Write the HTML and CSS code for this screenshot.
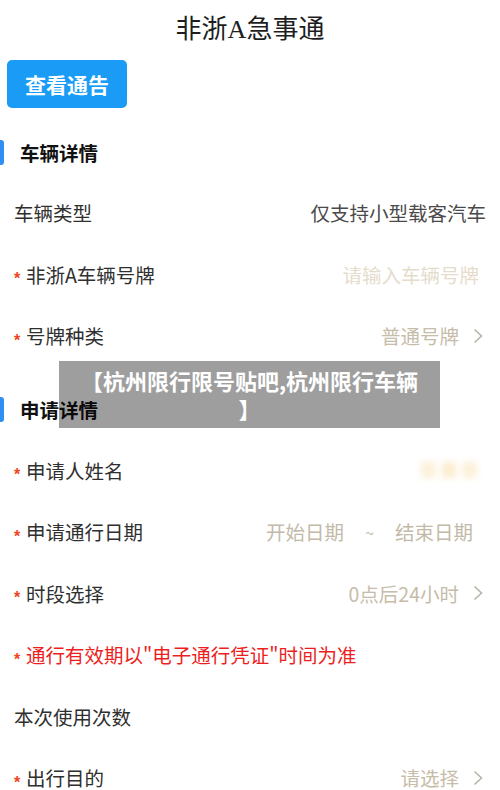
FILE: index.html
```html
<!DOCTYPE html>
<html lang="zh-CN">
<head>
<meta charset="utf-8">
<title>非浙A急事通</title>
<link rel="stylesheet" href="styles.css">
</head>
<body>
<div class="page">
  <header class="topbar"><h1 class="title">非浙A急事通</h1></header>
  <div class="notice-wrap"><button class="notice-btn">查看通告</button></div>

  <section class="section">
    <div class="section-head"><span class="bar"></span><span class="section-title">车辆详情</span></div>
    <div class="row">
      <span class="label">车辆类型</span>
      <span class="value dark">仅支持小型载客汽车</span>
    </div>
    <div class="row pad-input">
      <span class="label"><i class="req">*</i>非浙A车辆号牌</span>
      <span class="value placeholder">请输入车辆号牌</span>
    </div>
    <div class="row pad-arrow">
      <span class="label"><i class="req">*</i>号牌种类</span>
      <span class="value select">普通号牌<svg class="chev" viewBox="0 0 10 16" width="10" height="16"><polyline points="1.5,1.5 8.5,8 1.5,14.5" fill="none" stroke="#b9b2a6" stroke-width="1.6"/></svg></span>
    </div>
  </section>

  <section class="section second">
    <div class="section-head"><span class="bar"></span><span class="section-title">申请详情</span></div>
    <div class="row pad-input">
      <span class="label"><i class="req">*</i>申请人姓名</span>
      <span class="value blurred"><span class="blot b1"></span><span class="blot b2"></span><span class="blot b3"></span></span>
    </div>
    <div class="row pad-date">
      <span class="label"><i class="req">*</i>申请通行日期</span>
      <span class="value dates"><span>开始日期</span><span class="tilde">~</span><span>结束日期</span></span>
    </div>
    <div class="row pad-arrow">
      <span class="label"><i class="req">*</i>时段选择</span>
      <span class="value select">0点后24小时<svg class="chev" viewBox="0 0 10 16" width="10" height="16"><polyline points="1.5,1.5 8.5,8 1.5,14.5" fill="none" stroke="#b9b2a6" stroke-width="1.6"/></svg></span>
    </div>
    <div class="row">
      <span class="label warn"><i class="req">*</i>通行有效期以"电子通行凭证"时间为准</span>
    </div>
    <div class="row">
      <span class="label">本次使用次数</span>
    </div>
    <div class="row pad-arrow">
      <span class="label"><i class="req">*</i>出行目的</span>
      <span class="value select">请选择<svg class="chev" viewBox="0 0 10 16" width="10" height="16"><polyline points="1.5,1.5 8.5,8 1.5,14.5" fill="none" stroke="#b9b2a6" stroke-width="1.6"/></svg></span>
    </div>
  </section>

  <div class="overlay">【杭州限行限号贴吧,杭州限行车辆<br>】</div>
</div>
</body>
</html>
```

FILE: styles.css
```css
* { box-sizing: border-box; }
html, body { margin: 0; padding: 0; background: #fff; }
body {
  font-family: "Noto Sans CJK SC", "Noto Sans", sans-serif;
  color: #333;
  width: 500px;
  overflow: hidden;
}
.page { position: relative; width: 500px; }

.topbar {
  height: 60px;
  display: flex;
  align-items: center;
  justify-content: center;
}
.title {
  margin: 0;
  font-family: "Liberation Serif", "Noto Sans CJK SC", serif;
  font-weight: normal;
  font-size: 26px;
  color: #1e1e1e;
  line-height: 1;
}

.notice-wrap { padding-left: 7px; height: 48px; }
.notice-btn {
  width: 120px;
  height: 48px;
  border: none;
  border-radius: 5px;
  background: #1a9cf6;
  color: #fff;
  font-family: "Noto Sans CJK SC", sans-serif;
  font-weight: bold;
  font-size: 21px;
  padding: 0;
}

.section { margin-top: 14px; }
.section.second { margin-top: 13px; }
.section-head {
  height: 60px;
  display: flex;
  align-items: center;
}
.bar {
  width: 4px;
  height: 25px;
  background: #2f8ff2;
  border-radius: 0 3px 3px 0;
}
.section-title {
  margin-left: 16px;
  font-size: 19.5px;
  font-weight: bold;
  color: #111;
}

.row {
  height: 61.5px;
  display: flex;
  align-items: center;
  justify-content: space-between;
  padding: 0 14px;
  font-size: 19.5px;
}
.row.pad-input { padding-right: 21px; }
.row.pad-arrow { padding-right: 17px; }
.row.pad-date { padding-right: 27px; }

.label { display: flex; align-items: center; color: #2f2f2f; white-space: nowrap; }
.req {
  font-style: normal;
  font-family: "Liberation Sans", sans-serif;
  font-weight: bold;
  color: #f0441c;
  font-size: 16px;
  width: 12px;
  height: 16px;
  line-height: 16px;
  display: inline-block;
  margin-top: 10px;
}
.label.warn { color: #ec1e1e; }

.value { white-space: nowrap; }
.value.dark { color: #4a4a4a; }
.value.placeholder { color: #e5dccb; }
.value.select {
  color: #c6bca9;
  display: flex;
  align-items: center;
  gap: 14px;
}
.chev { display: block; }

.value.dates {
  display: flex;
  align-items: center;
  color: #c3baa9;
}
.tilde { margin: 0 21px; font-size: 16px; }

.value.blurred {
  display: flex;
  gap: 6px;
  width: 58px;
  height: 22px;
  align-items: center;
  filter: blur(3px);
}
.blot { display: block; height: 16px; background: #fcf1da; }
.b1 { width: 15px; }
.b2 { width: 14px; background: #fbedd0; }
.b3 { width: 15px; }

.overlay {
  position: absolute;
  left: 59px;
  top: 361px;
  width: 381px;
  height: 67px;
  background: rgba(0, 0, 0, 0.38);
  color: #fff;
  font-weight: bold;
  font-size: 22px;
  line-height: 28px;
  text-align: center;
  padding: 5px 12px 0 12px;
}
```
